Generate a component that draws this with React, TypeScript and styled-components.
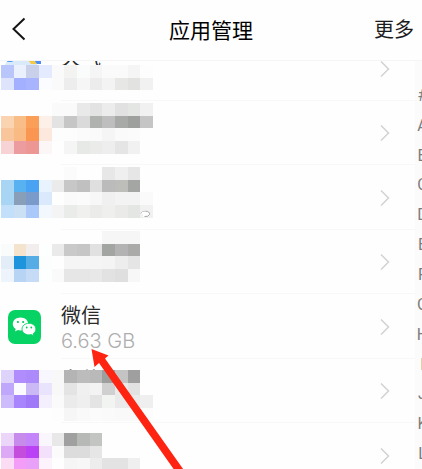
import React from 'react';
import styled, { createGlobalStyle } from 'styled-components';

const GlobalStyle = createGlobalStyle`
  *, *::before, *::after { box-sizing: border-box; }
  body {
    margin: 0;
    background: #fefefe;
    color: #1c1c1c;
    font-family: "Noto Sans CJK SC", "Noto Sans", sans-serif;
  }
`;

const Screen = styled.div`
  position: relative;
  display: flex;
  flex-direction: column;
  height: 100vh;
  overflow: hidden;
`;

const Header = styled.header`
  display: grid;
  grid-template-columns: 1fr auto 1fr;
  align-items: center;
  flex: none;
  height: 61px;
  padding: 0 8px 2px;
  border-bottom: 1px solid #f5f5f5;
  background: #fefefe;
  z-index: 1;
`;

const HeaderButton = styled.button<{ $end?: boolean }>`
  display: flex;
  justify-self: ${(p) => (p.$end ? 'end' : 'start')};
  padding: 0;
  border: 0;
  background: none;
  color: #1c1c1c;
  font: inherit;
  font-size: 20px;
  line-height: 30px;
  cursor: pointer;
`;

const Title = styled.h1`
  margin: 0;
  font-size: 21px;
  font-weight: 400;
  line-height: 30px;
  color: #000;
`;

const Body = styled.div`
  display: flex;
  flex: 1;
  min-height: 0;
`;

const Viewport = styled.main`
  flex: 1;
  min-width: 0;
  overflow: hidden;
`;

const AppList = styled.ul`
  margin: -25px 0 0;
  padding: 0;
  list-style: none;
`;

const Row = styled.li`
  position: relative;
  display: flex;
  align-items: center;
  height: 64px;
  padding: 0 25px 0 8px;

  &:nth-child(odd) { height: 65px; }

  &::after {
    content: "";
    position: absolute;
    left: 61px;
    right: 0;
    bottom: 0;
    height: 1px;
    background: #f7f8f8;
  }
`;

const IconSlot = styled.div`
  display: flex;
  flex: none;
  width: 53px;
`;

const Labels = styled.div`
  flex: 1;
`;

const AppName = styled.div`
  height: 28px;
  font-size: 20px;
  line-height: 28px;
  color: #2a2a2a;
`;

const AppSize = styled.div`
  height: 24px;
  font-family: Inter, "Noto Sans", sans-serif;
  font-size: 20px;
  font-weight: 300;
  line-height: 24px;
  color: #adadad;
`;

const Mosaic = styled.svg<{ $top: number }>`
  position: absolute;
  left: 1px;
  top: ${(p) => p.$top}px;
`;

const IndexBar = styled.nav`
  display: flex;
  flex: none;
  flex-direction: column;
  width: 15px;
  margin-right: -8px;
  padding: 20px 0 0;
  background: #fbfbfb;
`;

const IndexLink = styled.a`
  display: flex;
  flex: 1;
  align-items: center;
  justify-content: center;
  color: #7d7d7d;
  font-family: Roboto, sans-serif;
  font-size: 16px;
  line-height: 20px;
  text-decoration: none;
`;

const Pointer = styled.svg`
  position: absolute;
  left: 90px;
  top: 347px;
  pointer-events: none;
`;

interface AppEntry {
  name?: string;
  size?: string;
  top?: number;
  cells?: string[];
  detail?: 'weather' | 'spinner';
}

const entries: AppEntry[] = [
  {
    name: '天气',
    top: 29,
    detail: 'weather',
    cells: [
      'b8c6fb eaf0fc c9d1ea e4eaff fafafa f3f3f2 fafcfb f5f5f5 fafafa fafafa f5f5f5 fdfdfd',
      'dfe4fd a3b0ff a9b4ff fafcff fafafa ededed f6f6f6 ececec f3f3f3 e7e7e6 e2e2e0 f1f1f1',
    ],
  },
  {
    top: 2,
    cells: [
      '- - - - fafafa fafafa e9e9e9 e3e3e3 ececec e1e1e1 e4e6e4 f1f1f1',
      'fad3b0 f9bd87 fb9f58 fdf0e8 e3e3e3 c6c6c6 dadada b0b2af bebebe a8aaa7 9da09c c5c5c5',
      'f9c69c f9ba84 fb9552 fde8de fdfdfd fdfdfd fbfbfb fafafa f5f5f5 f9faf9 fbfbfb -',
      'f7d3d5 ec9c9e ec9794 fdf6f6 - f5f5f5 e7e9e6 ebece9 eeeeee e5e5e5 f1f1f1 -',
    ],
  },
  {
    top: 2,
    detail: 'spinner',
    cells: [
      '- - - - - fbfbfb - - e7e7e7 efefef e6e6e6 -',
      'a8d5f3 58b1f1 4aa2f2 e8f3fe ebebeb c7c7c7 c0c0c0 dfdfdf bbbbbb bdbdba a3a6a3 -',
      'a8d5f3 889eb9 7a9bc9 dbe9fd - fafafa fbfbfb f7f7f7 f0f0f0 f3f3f3 f3f3f3 fafafa',
      'c3e0fa cbdff5 aac8f9 f3f8fe f3f4f3 eaece9 f0f1ef ebecea eff0ee eaebe9 e4e6e4 f1f1f1',
    ],
  },
  {
    top: 1,
    cells: [
      '- - - - - - - - f6f6f6 f6f6f6 f6f6f6 -',
      'fafcfc f5e4cd f3eeee fdfefe eaeaea c9c9c9 c6c6c6 e1e1e1 a2a5a1 b3b3b3 aaaba9 -',
      'e3edf8 1e94dc 56ade5 fcfefe - f5f5f5 f5f5f5 f5f5f5 f4f4f4 ededed e5e5e5 -',
      'edf4fc b8d4f4 c6dbf6 fdfefe fafafa e6e6e6 e6e6e6 e8e8e8 e2e2e2 dfdfdf f7f7f7 -',
    ],
  },
  { name: '微信', size: '6.63 GB' },
  {
    name: '文件',
    top: 11,
    cells: [
      'ddd3fb b08cfc ad8afb f8f6ff f8f8f8 b4b4b4 bcbcbc b9b9b9 9c9f9b c4c4c4 9f9f9f -',
      'bfa7fb fbfaff cab9f5 e9e3fd f8f8f8 e4e4e4 f0f0f0 f3f3f3 d0d0d0 eaeaea e2e2e2 -',
      'cdbbfb a884fd 9f79f8 f3effd fafafa ebebeb efefef e4e4e4 f2f4f2 eaeaea ebebeb efefef',
      '- - - - fdfdfd f6f6f6 f9f9f9 fbfbfb fafafa f9f9f9 f9f9f9 fcfcfc',
    ],
  },
  {
    top: 10,
    cells: [
      'ebd6f9 c68beb c484fa faf6fe e8e8e8 a0a0a0 b6b9b6 c3c5c2 - - - -',
      'dda9f6 c44ddd bb42f4 f3e1fb fbfbfb dcdcdc dcdcdc e6e6e6 - - - -',
      'fadcf5 f39df8 e8a0f9 fdf3fd - f5f5f5 f7f7f7 ededed e3e3e3 e3e3e3 efefef -',
    ],
  },
];

const letters = ['#', 'A', 'B', 'C', 'D', 'E', 'F', 'G', 'H', 'I', 'J', 'K', 'L'];

const edge = (n: number) => Math.round((n * 38) / 3);

function CoveredContent({ top = 0, cells = [], detail }: AppEntry) {
  const height = edge(cells.length) + 5;
  return (
    <Mosaic $top={top - 5} width="153" height={height} viewBox={`0 -5 153 ${height}`} aria-hidden="true">
      {detail === 'weather' && (
        <>
          <path d="M7 -5H40V-1H36V0H4Q5 -3 7 -5Z" fill="#d9eafb" />
          <path d="M7 -5H13L11 -3H6Z" fill="#579df5" />
          <path d="M27 -5H33L36 -1H30Z" fill="#f4ca45" />
          <path d="M33 -5H40V-1H36Z" fill="#4d8bf5" />
        </>
      )}
      {cells.map((line, y) =>
        line.split(' ').map((color, x) =>
          color === '-' ? null : (
            <rect key={`${x}-${y}`} x={edge(x)} y={edge(y)} width={edge(x + 1) - edge(x)} height={edge(y + 1) - edge(y)} fill={`#${color}`} />
          ),
        ),
      )}
      {detail === 'spinner' && (
        <>
          <path d="M140 45Q144 42 148 45.500Q149 49 145 50H142V48Z" fill="#fefefe" />
          <path d="M139.500 46.500Q141 43.500 144.500 44.200" fill="none" stroke="#c4c4c4" />
          <path d="M144.500 44.200Q149 44.500 148.500 47.500Q147.500 50 143.500 49.500" fill="none" stroke="#a6a6a6" />
        </>
      )}
    </Mosaic>
  );
}

function WeChatIcon() {
  return (
    <svg width="33" height="34" viewBox="0 0 33 34" role="img" aria-label="微信">
      <rect width="33" height="34" rx="7" fill="#07d364" />
      <path d="M12.5 7.5C8 7.5 4.8 10.3 4.8 14c0 2.100 1.100 3.800 2.900 5l-.8 2.600 3-1.500c.8.200 1.700.300 2.600.300 4.400 0 7.700-2.900 7.700-6.400 0-3.700-3.300-6.500-7.700-6.500Z" fill="#fff" />
      <path d="M21 13.300c-4 0-7 2.600-7 5.800s3 5.800 7 5.800c.8 0 1.600-.1 2.300-.3l2.600 1.400-.7-2.300c1.700-1.100 2.700-2.700 2.700-4.600 0-3.200-3-5.800-6.900-5.800Z" fill="#fff" stroke="#07d364" strokeWidth="0.900" />
      <g fill="#07c95e">
        <circle cx="9.900" cy="12" r="1.100" />
        <circle cx="15.200" cy="12" r="1.100" />
        <circle cx="18.700" cy="17.500" r="0.900" />
        <circle cx="23.300" cy="17.500" r="0.900" />
      </g>
    </svg>
  );
}

function Chevron() {
  return (
    <svg width="10" height="16" viewBox="0 0 10 16" fill="none" aria-hidden="true">
      <path d="M1 .5l7.500 7.500-7.500 7.500" stroke="#d2d2d2" strokeWidth="1.500" />
    </svg>
  );
}

export default function App() {
  return (
    <>
      <GlobalStyle />
      <Screen>
        <Header>
          <HeaderButton type="button" aria-label="返回">
            <svg width="20" height="24" viewBox="0 0 20 24" fill="none">
              <path d="M16.500 1.500L5.500 12l11 10.500" stroke="#151515" strokeWidth="2" />
            </svg>
          </HeaderButton>
          <Title>应用管理</Title>
          <HeaderButton type="button" $end>更多</HeaderButton>
        </Header>
        <Body>
          <Viewport>
            <AppList>
              {entries.map((entry, i) => (
                <Row key={i}>
                  <IconSlot>{entry.size && <WeChatIcon />}</IconSlot>
                  <Labels>
                    <AppName>{entry.name}</AppName>
                    <AppSize>{entry.size}</AppSize>
                  </Labels>
                  {entry.cells && <CoveredContent {...entry} />}
                  <Chevron />
                </Row>
              ))}
            </AppList>
          </Viewport>
          <IndexBar aria-label="索引">
            {letters.map((letter) => (
              <IndexLink key={letter} href={`#${letter}`}>{letter}</IndexLink>
            ))}
          </IndexBar>
        </Body>
        <Pointer width="96" height="124" viewBox="0 0 96 124" aria-hidden="true">
          <path d="M1.500 2L18.500 8.500L15 11.500L94.500 124H85L9 16L4.500 20Z" fill="#ff2312" />
        </Pointer>
      </Screen>
    </>
  );
}
